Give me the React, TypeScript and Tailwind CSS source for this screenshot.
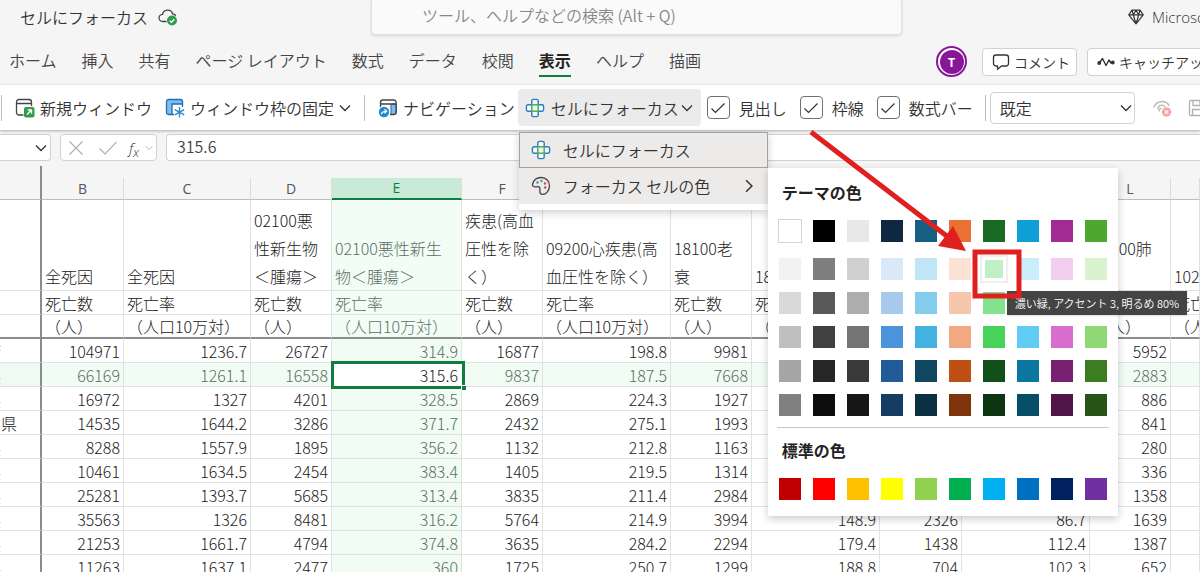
import type { ReactNode } from "react";

const tabs = ["ホーム", "挿入", "共有", "ページ レイアウト", "数式", "データ", "校閲", "表示", "ヘルプ", "描画"];

const checks = ["見出し", "枠線", "数式バー"];

const themeRows = [
  ["bg-[#ffffff]", "bg-[#000000]", "bg-[#e8e8e8]", "bg-[#0e2841]", "bg-[#156082]", "bg-[#e97132]", "bg-[#196b24]", "bg-[#0f9ed5]", "bg-[#a02b93]", "bg-[#4ea72e]"],
  ["bg-[#f2f2f2]", "bg-[#7f7f7f]", "bg-[#d0d0d0]", "bg-[#dae9f8]", "bg-[#c0e6f5]", "bg-[#fbe2d5]", "bg-[#c1f0c8]", "bg-[#caedfb]", "bg-[#f2ceef]", "bg-[#daf2d0]"],
  ["bg-[#d9d9d9]", "bg-[#595959]", "bg-[#adadad]", "bg-[#a6c9ec]", "bg-[#83cceb]", "bg-[#f7c7ac]", "bg-[#83e28e]", "bg-[#94dcf8]", "bg-[#e49edd]", "bg-[#b5e6a2]"],
  ["bg-[#bfbfbf]", "bg-[#404040]", "bg-[#747474]", "bg-[#4d93d9]", "bg-[#44b3e1]", "bg-[#f1a983]", "bg-[#47d359]", "bg-[#61cbf3]", "bg-[#d86dcd]", "bg-[#8ed973]"],
  ["bg-[#a6a6a6]", "bg-[#262626]", "bg-[#3a3a3a]", "bg-[#215c98]", "bg-[#104861]", "bg-[#be5014]", "bg-[#12501a]", "bg-[#0b76a0]", "bg-[#782170]", "bg-[#3c7d22]"],
  ["bg-[#808080]", "bg-[#0d0d0d]", "bg-[#161616]", "bg-[#153d64]", "bg-[#0a3041]", "bg-[#7e350e]", "bg-[#0c3512]", "bg-[#074f69]", "bg-[#501549]", "bg-[#275317]"],
];

const standardRow = [
  "bg-[#c00000]", "bg-[#ff0000]", "bg-[#ffc000]", "bg-[#ffff00]", "bg-[#92d050]",
  "bg-[#00b050]", "bg-[#00b0f0]", "bg-[#0070c0]", "bg-[#002060]", "bg-[#7030a0]",
];

const columns = [
  { letter: "", width: "w-[42px]" },
  { letter: "B", width: "w-[82px]" },
  { letter: "C", width: "w-[127px]" },
  { letter: "D", width: "w-[81px]" },
  { letter: "E", width: "w-[130px]" },
  { letter: "F", width: "w-[81px]" },
  { letter: "G", width: "w-[128px]" },
  { letter: "H", width: "w-[81px]" },
  { letter: "I", width: "w-[128px]" },
  { letter: "J", width: "w-[82px]" },
  { letter: "K", width: "w-[128px]" },
  { letter: "L", width: "w-[81px]" },
  { letter: "", width: "" },
];

const causes = [
  "", "全死因", "全死因", "02100悪\n性新生物\n＜腫瘍＞", "02100悪性新生\n物＜腫瘍＞", "疾患(高血\n圧性を除\nく）",
  "09200心疾患(高\n血圧性を除く）", "18100老\n衰", "18100老衰", "", "", "10200肺\n炎", "10200肺炎",
];

const kinds = ["", "死亡数", "死亡率", "死亡数", "死亡率", "死亡数", "死亡率", "死亡数", "死亡率", "死亡数", "死亡率", "死亡数", "死亡率"];

const units = kinds.map((k) => (k === "" ? "" : k === "死亡数" ? "（人）" : "（人口10万対）"));

const rows = [
  ["大阪府", "104971", "1236.7", "26727", "314.9", "16877", "198.8", "9981", "", "", "", "5952", ""],
  ["兵庫県", "66169", "1261.1", "16558", "315.6", "9837", "187.5", "7668", "", "", "", "2883", ""],
  ["奈良県", "16972", "1327", "4201", "328.5", "2869", "224.3", "1927", "", "", "", "886", ""],
  ["和歌山県", "14535", "1644.2", "3286", "371.7", "2432", "275.1", "1993", "", "", "", "841", ""],
  ["鳥取県", "8288", "1557.9", "1895", "356.2", "1132", "212.8", "1163", "", "", "", "280", ""],
  ["島根県", "10461", "1634.5", "2454", "383.4", "1405", "219.5", "1314", "", "", "", "336", ""],
  ["岡山県", "25281", "1393.7", "5685", "313.4", "3835", "211.4", "2984", "", "", "", "1358", ""],
  ["広島県", "35563", "1326", "8481", "316.2", "5764", "214.9", "3994", "148.9", "2326", "86.7", "1639", ""],
  ["山口県", "21253", "1661.7", "4794", "374.8", "3635", "284.2", "2294", "179.4", "1438", "112.4", "1387", ""],
  ["徳島県", "11263", "1637.1", "2477", "360", "1725", "250.7", "1299", "188.8", "704", "102.3", "652", ""],
];

const FOCUS_COL = 4;
const FOCUS_ROW = 1;

function Chevron({ className = "w-3 h-3" }: { className?: string }) {
  return (
    <svg viewBox="0 0 12 12" className={`shrink-0 ${className}`} fill="none" stroke="currentColor" strokeWidth="1.3">
      <path d="M1 3.5l5 5 5-5" />
    </svg>
  );
}

function FocusCellIcon() {
  return (
    <svg viewBox="0 0 20 20" className="w-5 h-5 shrink-0" fill="none" strokeWidth="1.4">
      <g stroke="#2b7cc4" fill="#f3f9fe">
        <path d="M6.8 6.8V3a1.6 1.6 0 0 1 1.6-1.6h3.2A1.6 1.6 0 0 1 13.2 3v3.8" />
        <path d="M13.2 6.8H17A1.6 1.6 0 0 1 18.6 8.4v3.2A1.6 1.6 0 0 1 17 13.2h-3.8" />
        <path d="M13.2 13.2V17a1.6 1.6 0 0 1-1.6 1.6H8.4A1.6 1.6 0 0 1 6.8 17v-3.8" />
        <path d="M6.8 13.2H3a1.6 1.6 0 0 1-1.6-1.6V8.4A1.6 1.6 0 0 1 3 6.8h3.8" />
      </g>
      <rect x="6.8" y="6.8" width="6.4" height="6.4" stroke="#4ca64c" fill="#e9f6e9" />
    </svg>
  );
}

function CloudSavedIcon() {
  return (
    <svg viewBox="0 0 20 18" className="w-5 h-[18px]" fill="none">
      <path d="M8.5 13.5H4.8a3.6 3.6 0 0 1-.3-7.2A5.2 5.2 0 0 1 14.6 5.8c1.6.1 2.8 1 3.2 2.3" stroke="#444" strokeWidth="1.3" />
      <circle cx="14" cy="12.5" r="5" fill="#2f9e4b" />
      <path d="M11.8 12.6l1.6 1.6 2.9-3" stroke="#fff" strokeWidth="1.3" />
    </svg>
  );
}

function NewWindowIcon() {
  return (
    <svg viewBox="0 0 20 20" className="w-5 h-5 shrink-0" fill="none">
      <path d="M8.5 17H4a2.5 2.5 0 0 1-2.5-2.5V4A2.5 2.5 0 0 1 4 1.5h10A2.5 2.5 0 0 1 16.5 4v4M1.5 5.5h15" stroke="#444" strokeWidth="1.3" />
      <rect x="9" y="9" width="10.5" height="10.5" rx="2" fill="#2f9e4b" />
      <path d="M12 16.5l4.5-4.5M12.8 12h3.7v3.7" stroke="#fff" strokeWidth="1.3" />
    </svg>
  );
}

function FreezeIcon() {
  return (
    <svg viewBox="0 0 20 20" className="w-5 h-5 shrink-0" fill="none">
      <path d="M1.5 3.5A2 2 0 0 1 3.5 1.5h12a2 2 0 0 1 2 2V6H7v10.5H3.5a2 2 0 0 1-2-2z" fill="#80bdee" stroke="#1b6fb5" strokeWidth="1.3" />
      <path d="M17.5 6v3M7 16.500h2" stroke="#1b6fb5" strokeWidth="1.3" />
      <path d="M14.5 9v10.500M9.8 11.600l9.400 5.300M19.2 11.600l-9.400 5.300" stroke="#2189d1" strokeWidth="1.3" />
    </svg>
  );
}

function NavigationIcon() {
  return (
    <svg viewBox="0 0 20 20" className="w-5 h-5 shrink-0" fill="none">
      <path d="M13 6h5v8.5a2 2 0 0 1-2 2h-3z" fill="#80bdee" stroke="#1b6fb5" />
      <path d="M2.5 9V4.500a2.500 2.500 0 0 1 2.500-2.500h10.500A2.500 2.500 0 0 1 18.200 4.500v9.500a2.500 2.500 0 0 1-2.500 2.500H12M2.500 6h15.500" stroke="#444" strokeWidth="1.3" />
      <circle cx="6" cy="14" r="5.2" fill="#2189d1" />
      <path d="M3.500 16.300c.2-2 1.500-3 4.500-3M6.500 11.200l2.200 2.100-2.200 2.100" stroke="#fff" strokeWidth="1.2" />
    </svg>
  );
}

function PaletteIcon() {
  return (
    <svg viewBox="0 0 20 20" className="w-5 h-5 shrink-0" fill="none">
      <path d="M1.500 8.500C2.500 4 6.200 1.500 10.200 1.500c5 0 8.500 3.700 8.300 8.500-.2 4.900-3.600 8.600-7 8.400-2.100-.1-3-1.900-2.600-4 .3-1.900.1-3.300-1.500-3.700-1.400-.3-2.400.4-3.600.2-1.500-.2-2.600-1-2.300-2.400z" stroke="#444" strokeWidth="1.3" />
      <circle cx="6.5" cy="6.5" r="1.2" fill="#3a8fd8" />
      <circle cx="10.5" cy="5" r="1.2" fill="#3fa757" />
      <circle cx="14" cy="7.5" r="1.2" fill="#d84a3a" />
      <circle cx="14.2" cy="11.5" r="1.2" fill="#b23fa8" />
    </svg>
  );
}

function DiamondIcon() {
  return (
    <svg viewBox="0 0 16 16" className="w-4 h-4 shrink-0" fill="none" stroke="#333" strokeWidth="1.2" strokeLinejoin="round">
      <path d="M4 1.2h8L15.2 5.8 8 14.8.8 5.8zM.8 5.8h14.4M4 1.2l1.3 4.6L8 14.8l2.7-9L12 1.2M5.3 5.8L8 1.2l2.7 4.6" />
    </svg>
  );
}

function Divider() {
  return <div className="h-[26px] w-px shrink-0 bg-[#bdbdbd]" />;
}

function RibbonButton({ icon, children }: { icon: ReactNode; children: ReactNode }) {
  return (
    <button className="flex items-center gap-[5px] shrink-0">
      {icon}
      {children}
    </button>
  );
}

function Swatch({ color, selected, outlined }: { color: string; selected?: boolean; outlined?: boolean }) {
  if (selected) {
    return (
      <button aria-label="濃い緑" className="-m-[3px] flex h-7 w-7 items-center justify-center border-2 border-[#f0eeee] bg-white">
        <span className={`h-[18px] w-[18px] ${color}`} />
      </button>
    );
  }
  return <button aria-label="色" className={`h-[22px] w-[22px] ${color} ${outlined ? "outline outline-[#d4d4d4]" : ""}`} />;
}

function ColorPanel() {
  return (
    <div className="absolute left-full top-9 w-[350px] bg-white px-[11px] pb-4 shadow-[0_3px_8px_rgba(0,0,0,0.2)]">
      <h3 className="px-[3px] pt-3 text-base font-bold leading-6 text-[#222]">テーマの色</h3>
      <div className="mt-4 flex gap-3">
        {themeRows[0].map((c, i) => (
          <Swatch key={c} color={c} outlined={i === 0} />
        ))}
      </div>
      <div className="mt-4 flex flex-col gap-3">
        {themeRows.slice(1).map((row, r) => (
          <div key={r} className="flex gap-3">
            {row.map((c, i) => (
              <Swatch key={c} color={c} selected={r === 0 && i === 6} />
            ))}
          </div>
        ))}
      </div>
      <hr className="-mx-0.5 mt-[11px] border-[#c8c8c8]" />
      <h3 className="px-[3px] pt-2.5 text-base font-bold leading-6 text-[#222]">標準の色</h3>
      <div className="mt-4 flex gap-3">
        {standardRow.map((c) => (
          <Swatch key={c} color={c} />
        ))}
      </div>

      {/* TOOLTIP */}
      <div role="tooltip" className="absolute left-[239px] top-[123px] whitespace-nowrap bg-[#444] px-2 text-[11px] leading-6 text-white shadow">
        濃い緑, アクセント 3, 明るめ 80%
      </div>
    </div>
  );
}

function FocusMenu() {
  return (
    <div className="absolute left-px top-[43px] z-20 w-[249px] bg-white pb-1.5 shadow-[0_3px_8px_rgba(0,0,0,0.18)]">
      <button className="flex h-9 w-full items-center gap-3 border border-[#a3a3a3] bg-[#edebe9] px-[11px]">
        <FocusCellIcon />
        セルにフォーカス
      </button>
      <button className="flex h-9 w-full items-center gap-3 bg-[#edebe9] px-3">
        <PaletteIcon />
        フォーカス セルの色
        <Chevron className="ml-auto h-3.5 w-3.5 -rotate-90" />
      </button>
      <ColorPanel />
    </div>
  );
}

function Ribbon() {
  return (
    <div className="relative z-10 flex h-[45px] items-center whitespace-nowrap bg-white shadow-[0_1px_3px_rgba(0,0,0,0.3)]">
      <div className="flex items-center gap-[13px] pl-px">
        <Divider />
        <RibbonButton icon={<NewWindowIcon />}>新規ウィンドウ</RibbonButton>
        <RibbonButton icon={<FreezeIcon />}>
          ウィンドウ枠の固定
          <Chevron />
        </RibbonButton>
        <Divider />
        <RibbonButton icon={<NavigationIcon />}>ナビゲーション</RibbonButton>
      </div>

      <div className="relative ml-[3px] shrink-0">
        <button className="flex h-[37px] w-[183px] items-center gap-1.5 rounded bg-[#ebebeb] px-[7px]">
          <FocusCellIcon />
          <span>セルにフォーカス</span>
          <Chevron className="-ml-1 h-3 w-3" />
        </button>
        <FocusMenu />
      </div>

      <div className="ml-1.5 flex shrink-0 gap-[13px]">
        {checks.map((c) => (
          <label key={c} className="flex items-center gap-[9px]">
            <span className="grid place-items-center">
              <input
                type="checkbox"
                defaultChecked
                className="peer col-start-1 row-start-1 h-[23px] w-[23px] appearance-none rounded border border-[#707070] bg-white"
              />
              <svg viewBox="0 0 16 16" className="pointer-events-none invisible col-start-1 row-start-1 h-4 w-4 peer-checked:visible" fill="none" stroke="#333" strokeWidth="1.2">
                <path d="M1.5 8.5l4 4 9-9" />
              </svg>
            </span>
            {c}
          </label>
        ))}
      </div>

      <div className="ml-3 flex shrink-0 items-center gap-1">
        <Divider />
        <div className="relative">
          <select aria-label="シート ビュー" className="h-8 w-[145px] appearance-none rounded border border-[#d1d1d1] bg-white px-[9px]">
            <option>既定</option>
          </select>
          <Chevron className="pointer-events-none absolute right-[3px] top-2.5 h-3 w-3" />
        </div>
      </div>

      <button aria-label="ビューを終了" className="ml-[17px] shrink-0">
        <svg viewBox="0 0 20 18" className="h-[18px] w-5" fill="none">
          <path d="M1.5 8.5C3.5 4.5 6.5 2.5 10 2.5s6 1.800 7.500 4.500M6 10.500a3.800 3.800 0 0 1 7-2.500M7.500 12.500a2 2 0 0 1 2-3" stroke="#b8b8b8" strokeWidth="1.3" />
          <circle cx="14.5" cy="13" r="4.7" fill="#f4a6a6" />
          <path d="M12.7 11.2l3.6 3.6M16.3 11.2l-3.6 3.6" stroke="#fff" strokeWidth="1.2" />
        </svg>
      </button>
      <button aria-label="ビューを保存" className="ml-4 shrink-0">
        <svg viewBox="0 0 18 18" className="h-[18px] w-[18px]" fill="none" stroke="#b0b0b0" strokeWidth="1.3">
          <path d="M3 1.5h10l3.500 3.500v10a1.500 1.500 0 0 1-1.500 1.500H3A1.500 1.500 0 0 1 1.500 15V3A1.500 1.500 0 0 1 3 1.500zM5 1.500v5h7v-5M4.500 16.500v-6h9v6" />
        </svg>
      </button>
    </div>
  );
}

function FormulaBar() {
  return (
    <div className="flex h-9 items-start gap-[9px] pt-1">
      <button aria-label="名前ボックス" className="flex h-[27px] w-[51px] shrink-0 items-center justify-end rounded-r border border-l-0 border-[#d1d1d1] bg-white pr-[3px]">
        <Chevron />
      </button>
      <div className="flex h-[27px] w-[97px] shrink-0 items-center rounded border border-[#d1d1d1] bg-white px-2">
        <button aria-label="キャンセル" className="mr-4">
          <svg viewBox="0 0 14 14" className="h-3.5 w-3.5" fill="none" stroke="#b0b0b0" strokeWidth="1.2">
            <path d="M.5.5l13 13M13.5.5l-13 13" />
          </svg>
        </button>
        <button aria-label="入力" className="mr-3">
          <svg viewBox="0 0 18 14" className="h-3.5 w-[18px]" fill="none" stroke="#b0b0b0" strokeWidth="1.2">
            <path d="M.5 7.5l5.500 5.500L17.5 1" />
          </svg>
        </button>
        <button aria-label="関数の挿入" className="flex items-center gap-1.5 font-['Open_Sans'] text-[15px] italic leading-5 text-[#333]">
          <span>
            f<sub className="text-xs">x</sub>
          </span>
          <Chevron className="h-2 w-2 text-[#aaa]" />
        </button>
      </div>
      <input
        aria-label="数式バー"
        defaultValue="315.6"
        className="h-[27px] min-w-0 flex-1 rounded-l border border-r-0 border-[#d1d1d1] bg-white px-2.5 pb-1 text-[#444] outline-none"
      />
    </div>
  );
}

function HeaderRow({ cells, className, last }: { cells: string[]; className: string; last?: boolean }) {
  return (
    <tr className={className}>
      {cells.map((c, i) => (
        <td
          key={i}
          className={`overflow-hidden whitespace-pre border-r pl-[3px] align-bottom ${
            last ? "border-b-2 border-b-[#8c8c8c]" : "border-b border-b-[#e1e1e1]"
          } ${i === 0 ? "border-r-2 border-r-[#8c8c8c]" : "border-r-[#e1e1e1]"} ${
            i === FOCUS_COL ? "bg-[#f1fdf5] text-[#5f6f64]" : ""
          }`}
        >
          {c}
        </td>
      ))}
    </tr>
  );
}

function DataCell({ value, row, col }: { value: string; row: number; col: number }) {
  const active = row === FOCUS_ROW && col === FOCUS_COL;
  const focused = row === FOCUS_ROW || col === FOCUS_COL;

  if (col === 0) {
    return (
      <td className={`h-6 overflow-hidden border-b border-r-2 border-b-[#e1e1e1] border-r-[#8c8c8c] p-0 ${focused ? "bg-[#effaf2]" : ""}`}>
        <div className={`flex justify-end whitespace-nowrap ${value.length > 3 ? "pr-[23px]" : "pr-[39px]"}`}>{value}</div>
      </td>
    );
  }
  if (active) {
    return (
      <td className="relative h-6 bg-white p-0 pr-1 text-right">
        {value}
        <span className="absolute -inset-y-0.5 -left-px -right-[3px] border-3 border-[#107c41]" />
        <span className="absolute -bottom-[3px] -right-1 h-[5px] w-[5px] border-l border-t border-white bg-[#107c41]" />
      </td>
    );
  }
  return (
    <td
      className={`h-6 overflow-hidden border-b border-r border-[#e1e1e1] p-0 pr-[3px] text-right ${
        focused ? "bg-[#f0fcf4] text-[#5f6f64]" : ""
      }`}
    >
      {value}
    </td>
  );
}

function Sheet() {
  return (
    <main>
      <div className="h-3 w-[42px] border-r-2 border-[#8c8c8c]" />
      <table className="w-full table-fixed border-separate border-spacing-0 bg-white font-light leading-[22px] text-[#222]">
        <colgroup>
          {columns.map((c, i) => (
            <col key={i} className={c.width} />
          ))}
        </colgroup>
        <thead>
          <tr className="h-[22px] bg-[#f5f5f5] font-['Open_Sans'] text-sm leading-5 text-[#555]">
            {columns.map((c, i) => (
              <th
                key={i}
                className={`border-r p-0 font-normal ${i === 0 ? "border-r-2 border-r-[#8c8c8c]" : "border-r-[#dcdcdc]"} ${
                  i === FOCUS_COL ? "border-b-2 border-b-[#107c41] bg-[#caead8] text-[#107c41]" : "border-b border-b-[#bdbdbd]"
                }`}
              >
                {c.letter}
              </th>
            ))}
          </tr>
        </thead>
        <tbody>
          <HeaderRow cells={causes} className="h-[91px] leading-7" />
          <HeaderRow cells={kinds} className="h-6" />
          <HeaderRow cells={units} className="h-6" last />
          {rows.map((r, ri) => (
            <tr key={ri}>
              {r.map((v, ci) => (
                <DataCell key={ci} value={v} row={ri} col={ci} />
              ))}
            </tr>
          ))}
        </tbody>
      </table>
    </main>
  );
}

export default function App() {
  return (
    <div className="relative h-screen w-full overflow-hidden bg-[#f5f5f5] font-['Noto_Sans_CJK_JP',sans-serif] text-base font-[350] leading-6 text-[#333]">
      {/* TITLE BAR */}
      <header className="flex h-[38px] items-start whitespace-nowrap">
        <div className="flex h-[35px] w-[371px] shrink-0 items-center gap-2.5 pb-0.5 pl-5">
          <h1>セルにフォーカス</h1>
          <CloudSavedIcon />
        </div>
        <input
          type="search"
          aria-label="検索"
          placeholder="ツール、ヘルプなどの検索 (Alt + Q)"
          className="h-[35px] min-w-0 flex-1 rounded-b border border-t-0 border-[#e0e0e0] bg-[#fafafa] px-[50px] pb-1 shadow-sm placeholder:text-[#888]"
        />
        <div className="flex h-[35px] w-[298px] shrink-0 items-center overflow-hidden pb-0.5 pl-[226px]">
          <button className="flex items-center gap-2 font-['Open_Sans'] text-[15px]">
            <DiamondIcon />
            Microsoft 365
          </button>
        </div>
      </header>

      {/* TABS */}
      <div className="flex h-[47px] items-center justify-between whitespace-nowrap">
        <nav className="flex gap-[25px] pl-[9px]">
          {tabs.map((t) => (
            <button
              key={t}
              className={`h-[31px] border-b-2 pb-0.5 ${t === "表示" ? "border-[#107c41] font-bold text-[#222]" : "border-transparent text-[#444]"}`}
            >
              {t}
            </button>
          ))}
        </nav>
        <div className="flex w-[264px] shrink-0 items-center overflow-hidden text-sm">
          <button className="flex h-[31px] w-[31px] shrink-0 items-center justify-center rounded-full border-2 border-[#881798] bg-white">
            <span className="h-6 w-6 rounded-full bg-[#881798] text-xs font-bold leading-6 text-white">T</span>
          </button>
          <button className="ml-[15px] flex h-7 shrink-0 items-center gap-1 rounded border border-[#d1d1d1] bg-white pl-[9px] pr-1.5">
            <svg viewBox="0 0 18 18" className="h-[18px] w-[18px]" fill="none" stroke="#333" strokeWidth="1.3" strokeLinejoin="round">
              <path d="M4 2h10a2.5 2.5 0 0 1 2.5 2.5v6A2.5 2.5 0 0 1 14 13h-4.500L5.500 16.300V13H4a2.500 2.500 0 0 1-2.500-2.500v-6A2.500 2.500 0 0 1 4 2z" />
            </svg>
            コメント
          </button>
          <button className="ml-2.5 flex h-7 shrink-0 items-center gap-1 rounded border border-[#d1d1d1] bg-white px-[9px]">
            <svg viewBox="0 0 18 12" className="h-3 w-[18px]" fill="none" stroke="#333" strokeWidth="1.4" strokeLinecap="round" strokeLinejoin="round">
              <path d="M2.500 7l3-4.500L9 9.500l3-5.500 2 3h1.500" />
              <circle cx="2.2" cy="7" r="1.2" fill="#333" />
              <circle cx="15.8" cy="6.5" r="1.2" fill="#333" />
            </svg>
            キャッチアップ
          </button>
        </div>
      </div>

      <Ribbon />
      <FormulaBar />
      <Sheet />

      {/* ARROW + FRAME */}
      <svg viewBox="0 0 220 180" className="pointer-events-none absolute left-[808px] top-32 z-30 h-[180px] w-[220px]" fill="none">
        <path d="M3 4L140 109" stroke="#e01f1f" strokeWidth="5" />
        <path d="M158 123L130 118L145 98z" fill="#e01f1f" />
        <rect x="167" y="124" width="44" height="44" stroke="#e01f1f" strokeWidth="5" />
      </svg>
    </div>
  );
}
